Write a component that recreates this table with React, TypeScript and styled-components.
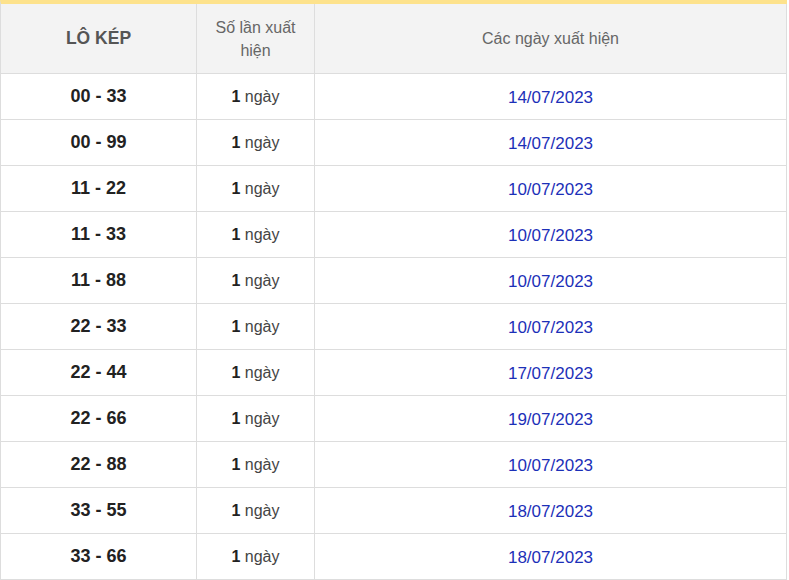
import React from "react";
import styled, { createGlobalStyle } from "styled-components";

const Global = createGlobalStyle`
  html, body { margin: 0; padding: 0; background: #fff; }
  body { font-family: "Liberation Sans", Arial, sans-serif; }
`;

const Table = styled.div`
  display: grid;
  grid-template-columns: 196px 118px 472px;
  width: 787px;
  box-sizing: border-box;
  border-top: 4px solid #fde28c;
  border-left: 1px solid #dddddd;
`;

const Cell = styled.div<{ $head?: boolean }>`
  box-sizing: border-box;
  height: ${(p) => (p.$head ? "70px" : "46px")};
  border-right: 1px solid #dddddd;
  border-bottom: 1px solid #dddddd;
  background: ${(p) => (p.$head ? "#f3f3f3" : "#ffffff")};
  display: flex;
  align-items: center;
  justify-content: center;
  text-align: center;
  padding: 0 8px;
`;

const HeadMain = styled.span`
  font-weight: bold;
  font-size: 17.5px;
  color: #555555;
`;

const HeadText = styled.span`
  font-size: 16px;
  line-height: 23px;
  color: #666666;
`;

const Pair = styled.span`
  font-weight: bold;
  font-size: 18px;
  color: #222222;
`;

const Count = styled.span`
  font-size: 16px;
  color: #444444;
  b { color: #222222; }
`;

const DateText = styled.span`
  font-size: 17px;
  color: #1c30b8;
  padding-top: 2px;
`;

const rows: [string, string][] = [
  ["00 - 33", "14/07/2023"],
  ["00 - 99", "14/07/2023"],
  ["11 - 22", "10/07/2023"],
  ["11 - 33", "10/07/2023"],
  ["11 - 88", "10/07/2023"],
  ["22 - 33", "10/07/2023"],
  ["22 - 44", "17/07/2023"],
  ["22 - 66", "19/07/2023"],
  ["22 - 88", "10/07/2023"],
  ["33 - 55", "18/07/2023"],
  ["33 - 66", "18/07/2023"],
];

export default function App() {
  return (
    <>
      <Global />
      <Table>
        <Cell $head>
          <HeadMain>LÔ KÉP</HeadMain>
        </Cell>
        <Cell $head>
          <HeadText>Số lần xuất hiện</HeadText>
        </Cell>
        <Cell $head>
          <HeadText>Các ngày xuất hiện</HeadText>
        </Cell>
        {rows.map(([pair, date]) => (
          <React.Fragment key={pair}>
            <Cell>
              <Pair>{pair}</Pair>
            </Cell>
            <Cell>
              <Count>
                <b>1</b> ngày
              </Count>
            </Cell>
            <Cell>
              <DateText>{date}</DateText>
            </Cell>
          </React.Fragment>
        ))}
      </Table>
    </>
  );
}
